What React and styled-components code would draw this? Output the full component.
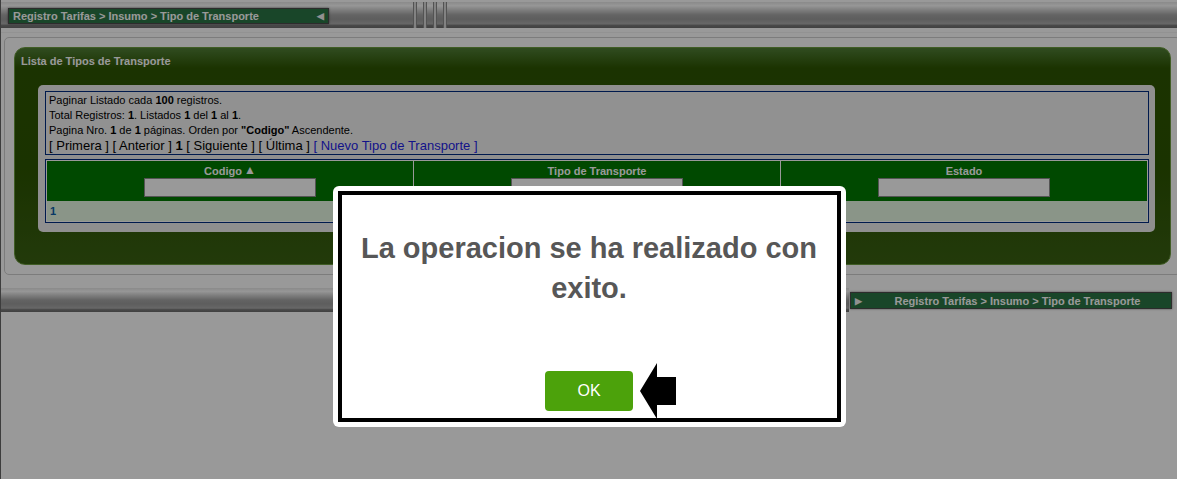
import React from "react";
import styled, { createGlobalStyle } from "styled-components";

const GlobalStyle = createGlobalStyle`
  html, body { margin: 0; padding: 0; background: #fff; }
  body { font-family: "Liberation Sans", Arial, sans-serif; }
  * { box-sizing: border-box; }
`;

const metal = `linear-gradient(#e6e6e6 0%, #fbfbfb 14%, #d4d4d4 30%, #a6a6a6 50%, #9c9c9c 66%, #acacac 84%, #7a7a7a 90%, #6c6c6c 100%)`;

const Frame = styled.div`
  width: 1177px;
  height: 479px;
  overflow: hidden;
  border-left: 1px solid #666;
  background: #fff;
  padding-top: 2px;
`;

const TopBar = styled.div`
  height: 26px;
  display: flex;
  align-items: flex-start;
  padding: 6px 0 0 7px;
  background: ${metal};
`;

const Crumb = styled.div`
  width: ${(p) => p.$w}px;
  height: ${(p) => p.$h}px;
  display: flex;
  align-items: center;
  gap: 6px;
  padding: 0 4px;
  background: #2a7545;
  border: 1px solid #4a4a4a;
  box-shadow: 0 0 2px rgba(0, 0, 0, 0.5);
  color: #fff;
  font-size: 11px;
  font-weight: bold;
  white-space: nowrap;
`;

const CrumbText = styled.span`
  flex: 1;
  text-align: ${(p) => p.$align};
`;

const CrumbArrow = styled.span`
  font-size: 9px;
  color: #f2f2f2;
`;

const Gripper = styled.div`
  margin: -6px 0 0 84px;
  height: 26px;
  display: flex;
  gap: 6px;
`;

const Ridge = styled.span`
  width: 4px;
  height: 26px;
  border-left: 1px solid #8a8a8a;
  border-right: 1px solid #8a8a8a;
  background: linear-gradient(90deg, #c4c4c4, #eeeeee, #c4c4c4);
`;

const Separator = styled.div`
  margin-top: 4px;
  height: 1px;
  background: #f4f4f4;
`;

const OuterBox = styled.div`
  margin: 4px -4px 0 3px;
  height: 238px;
  border: 1px solid #cfcfcf;
  border-radius: 5px;
  padding: 9px;
`;

const GreenPanel = styled.div`
  height: 218px;
  border: 1px solid #6c9b3e;
  border-radius: 11px;
  padding: 0 15px 0 6px;
  background: linear-gradient(#517f36 0px, #2e5602 20px, #2c5500 55%, #3a6113 100%);
`;

const PanelTitle = styled.div`
  height: 37px;
  padding-top: 7px;
  line-height: 13px;
  font-size: 11px;
  font-weight: bold;
  color: #fff;
`;

const InnerBox = styled.div`
  margin-left: 17px;
  height: 147px;
  background: #eeeeee;
  border-radius: 5px;
  padding: 6px 6px 9px 7px;
  display: flex;
  flex-direction: column;
  gap: 4px;
`;

const InfoBox = styled.div`
  border: 1px solid #002c80;
  background: #f2f2f2;
  padding: 1px 3px;
  font-size: 11px;
  line-height: 15px;
  color: #000;
`;

const Line = styled.div`
  font-size: ${(p) => (p.$big ? 13 : 11)}px;
  white-space: nowrap;
`;

const NavLink = styled.span`
  color: #1e1ee6;
`;

const Table = styled.div`
  border: 1px solid #002c80;
  padding: 1px;
  background: #fff;
`;

const HeaderRow = styled.div`
  display: grid;
  grid-template-columns: 1fr 1fr 1fr;
  gap: 1px;
`;

const HeaderCell = styled.div`
  height: 40px;
  background: #007b00;
  display: flex;
  flex-direction: column;
  align-items: center;
  padding-top: 3px;
  color: #fff;
  font-size: 11px;
  font-weight: bold;
  line-height: 14px;
`;

const SortMark = styled.span`
  font-size: 12px;
  line-height: 12px;
  margin-left: 2px;
  vertical-align: 1px;
`;

const FilterInput = styled.div`
  width: 172px;
  height: 19px;
  background: #fff;
  border: 1px solid #8c8c8c;
`;

const DataRow = styled.div`
  height: 20px;
  background: #e6f8e3;
  display: flex;
  align-items: center;
  padding-left: 3px;
  font-size: 11px;
  font-weight: bold;
  color: #0c5fa8;
`;

const BottomBar = styled.div`
  margin-top: 13px;
  height: 24px;
  display: flex;
  align-items: center;
`;

const BarFill = styled.div`
  flex: 1;
  height: 24px;
  background: ${metal};
  margin-right: 1px;
`;

const BottomCrumbWrap = styled.div`
  margin: 1px 5px 0 0;
`;

const Overlay = styled.div`
  position: fixed;
  inset: 0;
  background: rgba(0, 0, 0, 0.4);
`;

const Modal = styled.div`
  position: fixed;
  top: 186px;
  left: calc(50% - 256px);
  width: 513px;
  height: 241px;
  background: #fff;
  border-radius: 6px;
  padding: 5px;
`;

const ModalInner = styled.div`
  height: 100%;
  border: 4px solid #000;
  display: flex;
  flex-direction: column;
  align-items: center;
  padding: 33px 8px 7px;
`;

const Message = styled.div`
  font-size: 29px;
  font-weight: bold;
  line-height: 40px;
  color: #575757;
  text-align: center;
`;

const ButtonWrap = styled.div`
  margin-top: auto;
  position: relative;
`;

const OkButton = styled.button`
  width: 88px;
  height: 40px;
  border: none;
  border-radius: 4px;
  background: #4ca20b;
  color: #fff;
  font-family: "Liberation Sans", Arial, sans-serif;
  font-size: 16px;
  cursor: pointer;
`;

const Pointer = styled.svg`
  position: absolute;
  left: 95px;
  top: -8px;
`;

function Breadcrumb({ dir, w, h }) {
  const text = "Registro Tarifas > Insumo > Tipo de Transporte";
  return dir === "left" ? (
    <Crumb $w={w} $h={h}>
      <CrumbText $align="left">{text}</CrumbText>
      <CrumbArrow>◀</CrumbArrow>
    </Crumb>
  ) : (
    <Crumb $w={w} $h={h}>
      <CrumbArrow>▶</CrumbArrow>
      <CrumbText $align="center">{text}</CrumbText>
    </Crumb>
  );
}

export default function App() {
  const cols = [
    { label: "Codigo", sort: true },
    { label: "Tipo de Transporte" },
    { label: "Estado" },
  ];
  return (
    <>
      <GlobalStyle />
      <Frame>
        <TopBar>
          <Breadcrumb dir="left" w={321} h={16} />
          <Gripper>
            <Ridge />
            <Ridge />
            <Ridge />
            <Ridge />
          </Gripper>
        </TopBar>
        <Separator />
        <OuterBox>
          <GreenPanel>
            <PanelTitle>Lista de Tipos de Transporte</PanelTitle>
            <InnerBox>
              <InfoBox>
                <Line>
                  Paginar Listado cada <b>100</b> registros.
                </Line>
                <Line>
                  Total Registros: <b>1</b>. Listados <b>1</b> del <b>1</b> al <b>1</b>.
                </Line>
                <Line>
                  Pagina Nro. <b>1</b> de <b>1</b> páginas. Orden por <b>"Codigo"</b> Ascendente.
                </Line>
                <Line $big>
                  [ Primera ] [ Anterior ] <b>1</b> [ Siguiente ] [ Última ]{" "}
                  <NavLink>[ Nuevo Tipo de Transporte ]</NavLink>
                </Line>
              </InfoBox>
              <Table>
                <HeaderRow>
                  {cols.map((c) => (
                    <HeaderCell key={c.label}>
                      <span>
                        {c.label}
                        {c.sort && <SortMark>▲</SortMark>}
                      </span>
                      <FilterInput />
                    </HeaderCell>
                  ))}
                </HeaderRow>
                <DataRow>1</DataRow>
              </Table>
            </InnerBox>
          </GreenPanel>
        </OuterBox>
        <BottomBar>
          <BarFill />
          <BottomCrumbWrap>
            <Breadcrumb dir="right" w={322} h={17} />
          </BottomCrumbWrap>
        </BottomBar>
      </Frame>
      <Overlay />
      <Modal>
        <ModalInner>
          <Message>La operacion se ha realizado con exito.</Message>
          <ButtonWrap>
            <OkButton>OK</OkButton>
            <Pointer width="36" height="56" viewBox="0 0 36 56">
              <polygon points="0,28 17,0 17,14 36,14 36,42 17,42 17,56" fill="#000" />
            </Pointer>
          </ButtonWrap>
        </ModalInner>
      </Modal>
    </>
  );
}
